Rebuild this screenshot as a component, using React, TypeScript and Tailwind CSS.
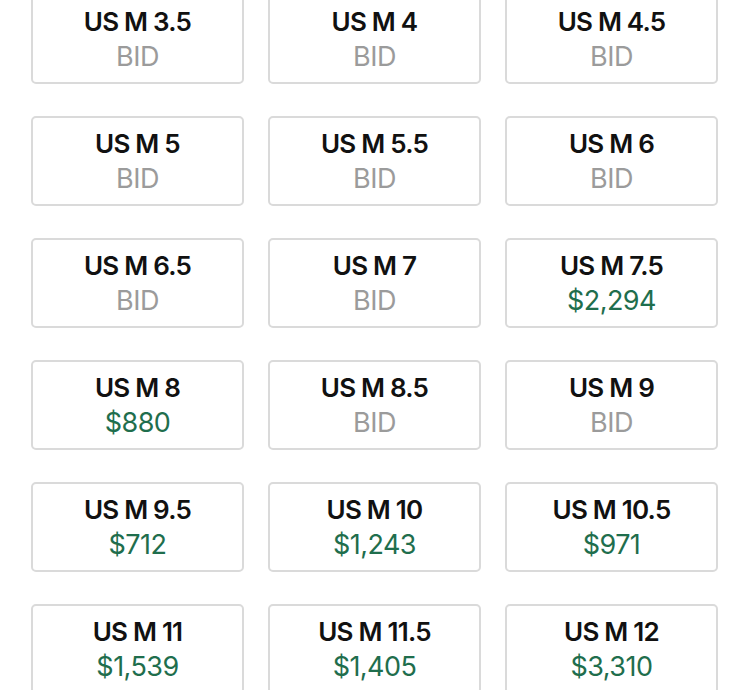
const sizes: { label: string; price?: string }[] = [
  { label: 'US M 3.5' },
  { label: 'US M 4' },
  { label: 'US M 4.5' },
  { label: 'US M 5' },
  { label: 'US M 5.5' },
  { label: 'US M 6' },
  { label: 'US M 6.5' },
  { label: 'US M 7' },
  { label: 'US M 7.5', price: '$2,294' },
  { label: 'US M 8', price: '$880' },
  { label: 'US M 8.5' },
  { label: 'US M 9' },
  { label: 'US M 9.5', price: '$712' },
  { label: 'US M 10', price: '$1,243' },
  { label: 'US M 10.5', price: '$971' },
  { label: 'US M 11', price: '$1,539' },
  { label: 'US M 11.5', price: '$1,405' },
  { label: 'US M 12', price: '$3,310' },
]

const SizeCard: React.FC<{ label: string; price?: string }> = ({ label, price }) => (
  <button className="flex h-[90px] flex-col items-center justify-center rounded-[5px] border-2 border-[#dadada] bg-white">
    <span className="text-[26px] font-semibold leading-[35px] tracking-[-0.03em] text-[#111]">
      {label}
    </span>
    <span
      className={
        price
          ? 'text-[27px] leading-[35px] tracking-[-0.02em] text-[#1f6e4d]'
          : 'text-[27px] leading-[35px] tracking-[-0.02em] text-[#9b9b9b]'
      }
    >
      {price ?? 'BID'}
    </span>
  </button>
)

const App: React.FC = () => {
  return (
    <div className="h-[690px] w-[750px] overflow-hidden bg-white font-['Inter',sans-serif]">
      <div className="-mt-[6px] grid grid-cols-3 gap-x-6 gap-y-8 pl-[31px] pr-[32px]">
        {sizes.map((s) => (
          <SizeCard key={s.label} label={s.label} price={s.price} />
        ))}
      </div>
    </div>
  )
}

export default App
